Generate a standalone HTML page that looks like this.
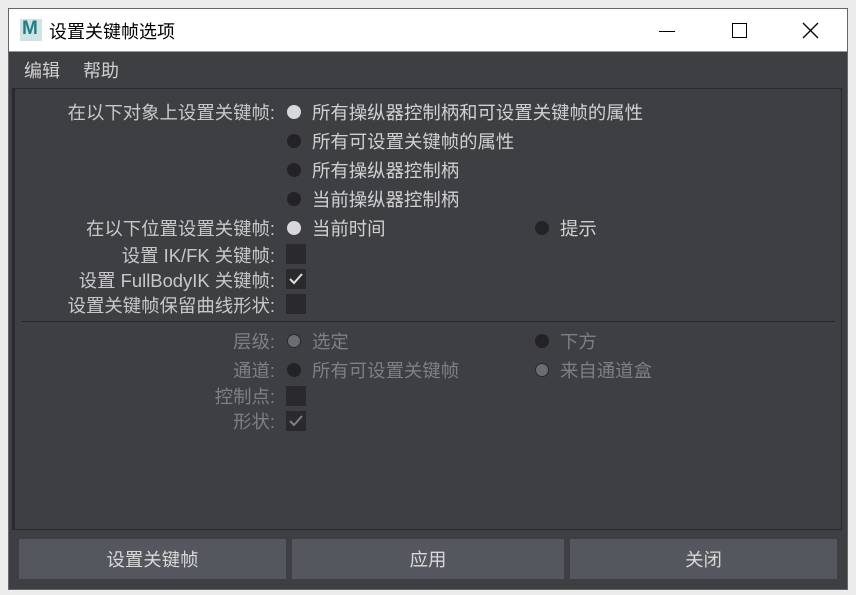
<!DOCTYPE html>
<html><head><meta charset="utf-8"><style>
*{margin:0;padding:0;box-sizing:border-box}
body{width:856px;height:595px;background:#ececec;position:relative;overflow:hidden;font-family:"Liberation Sans","Noto Sans CJK SC",sans-serif}
.win{position:absolute;left:8px;top:8px;width:840px;height:582px;background:#3e3f43;border:1px solid #666}
.title{position:absolute;left:0;top:0;width:838px;height:43px;background:#fff;border-bottom:1px solid #999}
.t{position:absolute;white-space:nowrap;font-size:18px;line-height:20px}
.lbl{position:absolute;right:581px;white-space:nowrap;font-size:18.4px;line-height:20px;color:#c8c8c8}
.opt{position:absolute;white-space:nowrap;font-size:18.4px;line-height:20px;color:#d0d0d0}
.dis{color:#7e7f82}
.r{position:absolute;width:14px;height:14px;border-radius:50%;background:#232325}
.r.on{background:#d8d8d8}
.r.g{background:#6a6d72;border:1px solid #2a2a2c}
.c{position:absolute;width:20px;height:20px;background:#2a2a2c}
.c svg{position:absolute;left:3px;top:3px}
.btn{position:absolute;top:539px;height:40px;background:#54575d;color:#d8d8d8;font-size:18.4px;line-height:42px;text-align:center}
</style></head><body>
<div class="win">
<div class="title">
<div style="position:absolute;left:11px;top:10px;width:22px;height:22px;background:#cfe3e3"><span style="position:absolute;left:2px;top:-1px;font:bold 19px 'Liberation Sans';color:#1f7f86">M</span></div>
<div class="t" style="left:40px;top:13px;color:#000">设置关键帧选项</div>
<div style="position:absolute;left:650px;top:22px;width:16px;height:1px;background:#000"></div>
<div style="position:absolute;left:723px;top:14px;width:15px;height:15px;border:1px solid #000"></div>
<svg style="position:absolute;left:793px;top:13px" width="17" height="17"><path d="M1 1L16 16M16 1L1 16" stroke="#000" stroke-width="1.3"/></svg>
</div>
</div>
<div class="t" style="left:24px;top:61px;color:#d0d0d0">编辑</div>
<div class="t" style="left:83px;top:61px;color:#d0d0d0">帮助</div>
<div style="position:absolute;left:12px;top:88px;width:830px;height:442px;border:1px solid #2a2a2c;border-left:3px solid #2a2a2c"></div>

<div class="lbl" style="top:103px">在以下对象上设置关键帧:</div>
<div class="r on" style="left:287px;top:105px"></div><div class="opt" style="left:312px;top:103px">所有操纵器控制柄和可设置关键帧的属性</div>
<div class="r" style="left:287px;top:134px"></div><div class="opt" style="left:312px;top:132px">所有可设置关键帧的属性</div>
<div class="r" style="left:287px;top:163px"></div><div class="opt" style="left:312px;top:161px">所有操纵器控制柄</div>
<div class="r" style="left:287px;top:192px"></div><div class="opt" style="left:312px;top:190px">当前操纵器控制柄</div>
<div class="lbl" style="top:219px">在以下位置设置关键帧:</div>
<div class="r on" style="left:287px;top:221px"></div><div class="opt" style="left:312px;top:219px">当前时间</div>
<div class="r" style="left:535px;top:221px"></div><div class="opt" style="left:560px;top:219px">提示</div>
<div class="lbl" style="top:246px">设置 IK/FK 关键帧:</div><div class="c" style="left:286px;top:244px"></div>
<div class="lbl" style="top:271px">设置 FullBodyIK 关键帧:</div><div class="c" style="left:286px;top:269px"><svg width="14" height="14"><path d="M1 7L5 11L13 2" stroke="#e0e0e0" stroke-width="2" fill="none"/></svg></div>
<div class="lbl" style="top:296px">设置关键帧保留曲线形状:</div><div class="c" style="left:286px;top:294px"></div>
<div style="position:absolute;left:22px;top:321px;width:813px;height:1px;background:#27272a"></div>
<div class="lbl dis" style="top:332px;color:#7e7f82">层级:</div>
<div class="r g" style="left:287px;top:334px"></div><div class="opt dis" style="left:312px;top:332px">选定</div>
<div class="r" style="left:535px;top:334px"></div><div class="opt dis" style="left:560px;top:332px">下方</div>
<div class="lbl" style="top:361px;color:#7e7f82">通道:</div>
<div class="r" style="left:287px;top:363px"></div><div class="opt dis" style="left:312px;top:361px">所有可设置关键帧</div>
<div class="r g" style="left:535px;top:363px"></div><div class="opt dis" style="left:560px;top:361px">来自通道盒</div>
<div class="lbl" style="top:387px;color:#7e7f82">控制点:</div><div class="c" style="left:286px;top:386px"></div>
<div class="lbl" style="top:412px;color:#7e7f82">形状:</div><div class="c" style="left:286px;top:411px"><svg width="14" height="14"><path d="M1 7L5 11L13 2" stroke="#808080" stroke-width="2" fill="none"/></svg></div>

<div class="btn" style="left:19px;width:267px">设置关键帧</div>
<div class="btn" style="left:292px;width:272px">应用</div>
<div class="btn" style="left:570px;width:267px">关闭</div>
</body></html>
